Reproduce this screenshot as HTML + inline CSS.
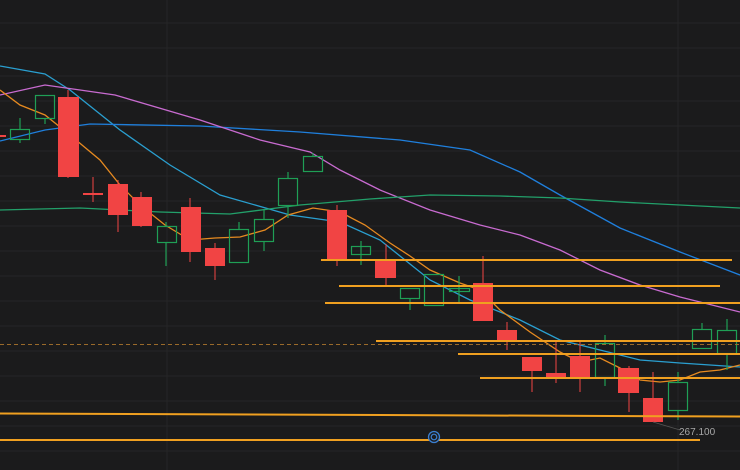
<!DOCTYPE html>
<html><head><meta charset="utf-8"><style>
html,body{margin:0;padding:0;background:#1b1b1c;width:740px;height:470px;overflow:hidden}
svg{display:block}
text{font-family:"Liberation Sans",sans-serif}
</style></head><body>
<svg width="740" height="470" viewBox="0 0 740 470" xmlns="http://www.w3.org/2000/svg">
<rect width="740" height="470" fill="#1b1b1c"/>
<g stroke="#262627" stroke-width="1">
<line x1="0" y1="23" x2="740" y2="23"/><line x1="0" y1="48" x2="740" y2="48"/><line x1="0" y1="76" x2="740" y2="76"/>
<line x1="0" y1="101" x2="740" y2="101"/><line x1="0" y1="126" x2="740" y2="126"/><line x1="0" y1="151" x2="740" y2="151"/>
<line x1="0" y1="176" x2="740" y2="176"/><line x1="0" y1="201" x2="740" y2="201"/><line x1="0" y1="226" x2="740" y2="226"/>
<line x1="0" y1="251" x2="740" y2="251"/><line x1="0" y1="276" x2="740" y2="276"/><line x1="0" y1="301" x2="740" y2="301"/>
<line x1="0" y1="326" x2="740" y2="326"/><line x1="0" y1="351" x2="740" y2="351"/><line x1="0" y1="376" x2="740" y2="376"/>
<line x1="0" y1="401" x2="740" y2="401"/><line x1="0" y1="426" x2="740" y2="426"/><line x1="0" y1="451" x2="740" y2="451"/>
<line x1="167" y1="0" x2="167" y2="470"/><line x1="678" y1="0" x2="678" y2="470"/>
</g>
<g fill="none" stroke-width="1.3">
<polyline stroke="#2a9fd0" points="0,66 45,74 70,90 120,130 170,165 220,195 290,215 340,222 380,240 430,280 470,300 520,320 560,340 600,350 640,360 680,363 740,367"/>
<polyline stroke="#1f7fdc" points="0,141 45,130 90,124 200,126 300,132 400,140 470,150 520,172 560,195 620,228 680,252 740,275"/>
<polyline stroke="#c86bd0" points="0,95 45,85 115,95 200,120 260,140 310,152 340,170 380,190 430,210 480,225 520,235 560,250 600,270 640,285 680,297 740,312"/>
<polyline stroke="#22a06a" points="0,210 80,208 160,212 230,214 300,205 370,199 430,195 500,196 560,198 620,202 740,208"/>
<polyline stroke="#e68a20" points="0,90 20,105 45,115 70,135 100,160 120,185 140,205 165,225 190,240 215,238 240,237 265,230 288,215 313,208 340,212 365,225 390,243 410,256 430,270 460,283 480,290 500,310 530,332 560,352 580,362 600,358 620,368 640,380 660,382 680,380 700,372 720,370 740,365"/>
</g>
<!-- red candles -->
<g fill="#f14444" stroke="#f14444">
<rect x="0" y="135" width="6" height="2" stroke="none"/>
<line x1="68" y1="90" x2="68" y2="178"/><rect x="58" y="97" width="21" height="80" stroke="none"/>
<line x1="93" y1="177" x2="93" y2="202"/><rect x="83" y="193" width="20" height="2" stroke="none"/>
<line x1="118" y1="180" x2="118" y2="232"/><rect x="108" y="184" width="20" height="31" stroke="none"/>
<line x1="141" y1="192" x2="141" y2="227"/><rect x="132" y="197" width="20" height="29" stroke="none"/>
<line x1="190" y1="198" x2="190" y2="262"/><rect x="181" y="207" width="20" height="45" stroke="none"/>
<line x1="215" y1="243" x2="215" y2="280"/><rect x="205" y="248" width="20" height="18" stroke="none"/>
<line x1="337" y1="205" x2="337" y2="266"/><rect x="327" y="210" width="20" height="50" stroke="none"/>
<line x1="386" y1="244" x2="386" y2="285"/><rect x="375" y="260" width="21" height="18" stroke="none"/>
<line x1="483" y1="256" x2="483" y2="321"/><rect x="473" y="283" width="20" height="38" stroke="none"/>
<line x1="507" y1="322" x2="507" y2="350"/><rect x="497" y="330" width="20" height="12" stroke="none"/>
<line x1="532" y1="357" x2="532" y2="392"/><rect x="522" y="357" width="20" height="14" stroke="none"/>
<line x1="556" y1="342" x2="556" y2="383"/><rect x="546" y="373" width="20" height="4" stroke="none"/>
<line x1="580" y1="342" x2="580" y2="392"/><rect x="570" y="356" width="20" height="21" stroke="none"/>
<line x1="629" y1="366" x2="629" y2="412"/><rect x="618" y="368" width="21" height="25" stroke="none"/>
<line x1="653" y1="372" x2="653" y2="422"/><rect x="643" y="398" width="20" height="24" stroke="none"/>
</g>
<!-- green candles -->
<g fill="none" stroke="#1f9f55" stroke-width="1.2">
<line x1="20" y1="118" x2="20" y2="129"/><line x1="20" y1="139" x2="20" y2="143"/><rect x="10.5" y="129.5" width="19" height="10"/>
<line x1="45" y1="118" x2="45" y2="124"/><rect x="35.5" y="95.5" width="19" height="23"/>
<line x1="166" y1="222" x2="166" y2="226"/><line x1="166" y1="242" x2="166" y2="266"/><rect x="157.5" y="226.5" width="19" height="16"/>
<line x1="239" y1="222" x2="239" y2="229"/><rect x="229.5" y="229.5" width="19" height="33"/>
<line x1="264" y1="210" x2="264" y2="219"/><line x1="264" y1="241" x2="264" y2="251"/><rect x="254.5" y="219.5" width="19" height="22"/>
<line x1="288" y1="172" x2="288" y2="178"/><line x1="288" y1="205" x2="288" y2="218"/><rect x="278.5" y="178.5" width="19" height="27"/>
<line x1="313" y1="153" x2="313" y2="156"/><rect x="303.5" y="156.5" width="19" height="15"/>
<line x1="361" y1="241" x2="361" y2="265"/><rect x="351.5" y="246.5" width="19" height="8"/>
<line x1="410" y1="298" x2="410" y2="310"/><rect x="400.5" y="288.5" width="19" height="10"/>
<rect x="424.5" y="274.5" width="19" height="31"/>
<line x1="459" y1="276" x2="459" y2="303"/><rect x="449.5" y="288.5" width="20" height="3"/>
<line x1="605" y1="335" x2="605" y2="343"/><line x1="605" y1="377" x2="605" y2="386"/><rect x="595.5" y="343.5" width="19" height="34"/>
<line x1="678" y1="372" x2="678" y2="382"/><line x1="678" y1="410" x2="678" y2="420"/><rect x="668.5" y="382.5" width="19" height="28"/>
<line x1="702" y1="323" x2="702" y2="329"/><rect x="692.5" y="329.5" width="19" height="19"/>
<line x1="727" y1="319" x2="727" y2="330"/><line x1="727" y1="353" x2="727" y2="370"/><rect x="717.5" y="330.5" width="19" height="23"/>
</g>
<!-- horizontal levels -->
<line x1="0" y1="344.5" x2="740" y2="344.5" stroke="#9a6a2a" stroke-width="1" stroke-dasharray="4,3"/>
<g stroke="#f0a020" stroke-width="2">
<line x1="321" y1="260" x2="732" y2="260"/>
<line x1="339" y1="286" x2="720" y2="286"/>
<line x1="325" y1="303" x2="740" y2="303"/>
<line x1="376" y1="341" x2="740" y2="341"/>
<line x1="458" y1="354" x2="740" y2="354"/>
<line x1="480" y1="378" x2="740" y2="378"/>
<line x1="0" y1="413.5" x2="740" y2="416.5"/>
<line x1="0" y1="440" x2="700" y2="440"/>
</g>
<line x1="653" y1="422" x2="680" y2="430" stroke="#555" stroke-width="0.8"/>
<text x="679" y="435" font-size="10" fill="#a8a8a8">267.100</text>
<circle cx="434" cy="437" r="5.5" fill="#1b1b1c" stroke="#3b7fd0" stroke-width="1.3"/>
<circle cx="434" cy="437" r="2.8" fill="none" stroke="#3b7fd0" stroke-width="1.2"/>
</svg>
</body></html>
